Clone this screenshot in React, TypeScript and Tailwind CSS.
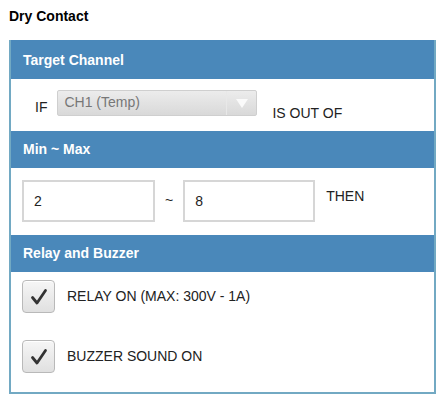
import React from 'react';

const Check = () => (
  <div className="w-[33px] h-[33px] rounded-[4px] border border-[#b9b9b9] bg-gradient-to-b from-[#f6f6f6] to-[#e0e0e0] flex items-center justify-center shadow-[inset_0_1px_0_#fff]">
    <svg width="20" height="20" viewBox="0 0 20 20">
      <path d="M3.5 10.5 L8 16 L16.5 3.5" fill="none" stroke="#333" strokeWidth="2.8" strokeLinecap="round" strokeLinejoin="round" />
    </svg>
  </div>
);

const Header = ({ children }: { children: React.ReactNode }) => (
  <div className="bg-[#4a88ba] text-white font-bold text-[14px] px-[12px] h-[37px] flex items-center">{children}</div>
);

export default function App() {
  return (
    <div className="w-[445px] h-[402px] bg-white text-[#222]" style={{ fontFamily: '"Liberation Sans", Arial, sans-serif' }}>
      <div className="px-[9px] pt-[6px] h-[40px] text-[14px] font-bold text-black">Dry Contact</div>
      <div className="mx-[9px] border-2 border-[#72a9c3] border-t-0">
        <div className="border-t-2 border-[#4a88ba]">
          <Header>Target Channel</Header>
        </div>
        <div className="h-[52px] flex items-start pt-[11px] pl-[24px] text-[14px]">
          <span className="mt-[7px] mr-[10px]">IF</span>
          <div className="w-[200px] h-[26px] rounded-[2px] border border-[#cfcfcf] bg-gradient-to-b from-[#ececec] to-[#d9d9d9] flex items-center">
            <span className="flex-1 pl-[6px] text-[#777] text-[14px] -mt-[2px]">CH1 (Temp)</span>
            <div className="w-[30px] h-full border-l border-[#e8e8e8] flex items-center justify-center">
              <svg width="12" height="9" viewBox="0 0 12 9"><path d="M0 0 H12 L6 9 Z" fill="#fafafa" /></svg>
            </div>
          </div>
          <span className="mt-[13px] ml-[15px]">IS OUT OF</span>
        </div>
        <Header>Min ~ Max</Header>
        <div className="h-[67px] flex items-start pt-[12px] pl-[11px] text-[14px]">
          <div className="w-[133px] h-[42px] border-2 border-[#d6d6d6] flex items-center pl-[10px]">2</div>
          <span className="mt-[10px] mx-[10px]">~</span>
          <div className="w-[132px] h-[42px] border-2 border-[#d6d6d6] flex items-center pl-[10px]">8</div>
          <span className="mt-[6px] ml-[11px]">THEN</span>
        </div>
        <Header>Relay and Buzzer</Header>
        <div className="pt-[8px] pb-[19px] pl-[11px] flex flex-col gap-[27px] text-[14px]">
          <div className="flex items-center gap-[12px]">
            <Check />
            <span>RELAY ON (MAX: 300V - 1A)</span>
          </div>
          <div className="flex items-center gap-[12px]">
            <Check />
            <span>BUZZER SOUND ON</span>
          </div>
        </div>
      </div>
    </div>
  );
}
